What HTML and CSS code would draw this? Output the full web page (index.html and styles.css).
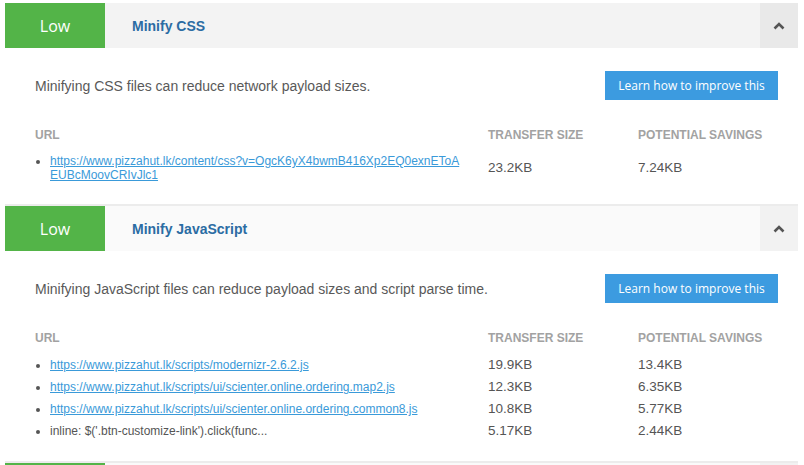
FILE: index.html
```html
<!DOCTYPE html>
<html>
<head>
    <meta charset="UTF-8">
    <title>Recommendations</title>
    <link rel="stylesheet" href="styles.css">
</head>
<body>
    <div class="container">
        <div class="audit">
            <div class="audit-head is-hover">
                <div class="badge">Low</div>
                <div class="audit-title">Minify CSS</div>
                <div class="toggle">
                    <svg width="12" height="8" viewBox="0 0 12 8"><polyline points="1.5,6.5 6,2 10.5,6.5" fill="none" stroke="#555" stroke-width="2.6"/></svg>
                </div>
            </div>
            <div class="audit-body">
                <div class="summary">
                    <p class="desc">Minifying CSS files can reduce network payload sizes.</p>
                    <a class="learn-button" href="#">Learn how to improve this</a>
                </div>
                <table class="details">
                    <colgroup>
                        <col class="col-url">
                        <col class="col-size">
                        <col class="col-save">
                    </colgroup>
                    <tr>
                        <th>URL</th>
                        <th>Transfer Size</th>
                        <th>Potential Savings</th>
                    </tr>
                    <tr>
                        <td class="url-cell"><ul><li><a href="#">https://www.pizzahut.lk/content/css?v=OgcK6yX4bwmB416Xp2EQ0exnEToAEUBcMoovCRIvJlc1</a></li></ul></td>
                        <td>23.2KB</td>
                        <td>7.24KB</td>
                    </tr>
                </table>
            </div>
        </div>

        <div class="audit">
            <div class="audit-head">
                <div class="badge">Low</div>
                <div class="audit-title">Minify JavaScript</div>
                <div class="toggle">
                    <svg width="12" height="8" viewBox="0 0 12 8"><polyline points="1.5,6.5 6,2 10.5,6.5" fill="none" stroke="#555" stroke-width="2.6"/></svg>
                </div>
            </div>
            <div class="audit-body">
                <div class="summary">
                    <p class="desc">Minifying JavaScript files can reduce payload sizes and script parse time.</p>
                    <a class="learn-button" href="#">Learn how to improve this</a>
                </div>
                <table class="details">
                    <colgroup>
                        <col class="col-url">
                        <col class="col-size">
                        <col class="col-save">
                    </colgroup>
                    <tr>
                        <th>URL</th>
                        <th>Transfer Size</th>
                        <th>Potential Savings</th>
                    </tr>
                    <tr>
                        <td class="url-cell"><ul><li><a href="#">https://www.pizzahut.lk/scripts/modernizr-2.6.2.js</a></li></ul></td>
                        <td>19.9KB</td>
                        <td>13.4KB</td>
                    </tr>
                    <tr>
                        <td class="url-cell"><ul><li><a href="#">https://www.pizzahut.lk/scripts/ui/scienter.online.ordering.map2.js</a></li></ul></td>
                        <td>12.3KB</td>
                        <td>6.35KB</td>
                    </tr>
                    <tr>
                        <td class="url-cell"><ul><li><a href="#">https://www.pizzahut.lk/scripts/ui/scienter.online.ordering.common8.js</a></li></ul></td>
                        <td>10.8KB</td>
                        <td>5.77KB</td>
                    </tr>
                    <tr>
                        <td class="url-cell"><ul><li>inline: $('.btn-customize-link').click(func...</li></ul></td>
                        <td>5.17KB</td>
                        <td>2.44KB</td>
                    </tr>
                </table>
            </div>
        </div>

        <!-- next audit, only its top edge is in view -->
        <div class="audit">
            <div class="audit-head">
                <div class="badge"></div>
                <div class="audit-title"></div>
                <div class="toggle"></div>
            </div>
        </div>
    </div>
</body>
</html>
```

FILE: styles.css
```css
body {
    margin: 0;
    background-color: #fff;
    font-family: "Liberation Sans", Arial, sans-serif;
    color: #555;
    overflow: hidden;
}

.container {
    padding: 3px 6px 0 5px;
}

.audit {
    border-top: 2px solid #ececec;
}

.audit:first-child {
    border-top: none;
}

.audit-head {
    display: flex;
    height: 45px;
    background-color: #fafafa;
}

.audit-head.is-hover {
    background-color: #f3f3f3;
}

.badge {
    width: 100px;
    display: flex;
    align-items: center;
    justify-content: center;
    background-color: #53b448;
    color: #fff;
    font-family: "Open Sans", sans-serif;
    font-size: 16px;
}

.audit-title {
    flex: 1;
    display: flex;
    align-items: center;
    padding-left: 27px;
    font-size: 14px;
    font-weight: bold;
    color: #2b6ca3;
}

.toggle {
    width: 38px;
    display: flex;
    align-items: center;
    justify-content: center;
    background-color: #f2f2f2;
}

.is-hover .toggle {
    background-color: #e9e9e9;
}

.audit-body {
    padding: 23px 20px 19px 25px;
}

.summary {
    display: flex;
    align-items: center;
    justify-content: space-between;
    padding-left: 5px;
}

.desc {
    margin: 0;
    font-size: 14px;
    color: #595959;
}

.learn-button {
    display: block;
    box-sizing: border-box;
    width: 173px;
    height: 29px;
    line-height: 29px;
    text-align: center;
    white-space: nowrap;
    background-color: #3c9be0;
    color: #fff;
    font-family: "Open Sans", sans-serif;
    font-size: 12px;
    text-decoration: none;
}

.details {
    margin-top: 18px;
    margin-left: 5px;
    border-collapse: collapse;
    table-layout: fixed;
    width: 743px;
}

.col-url {
    width: 453px;
}

.col-size {
    width: 150px;
}

.col-save {
    width: 140px;
}

.details th {
    height: 33px;
    padding: 0;
    text-align: left;
    font-size: 12px;
    font-weight: bold;
    text-transform: uppercase;
    color: #a2a2a2;
}

.details td {
    padding: 3px 0;
    font-size: 13.5px;
    line-height: 16px;
    vertical-align: middle;
}

.details .url-cell {
    padding-right: 26px;
}

.url-cell ul {
    margin: 0;
    padding-left: 15px;
}

.url-cell li {
    font-size: 12px;
    line-height: 14px;
    word-break: break-all;
}

.url-cell a {
    color: #3a9ad9;
}
```
